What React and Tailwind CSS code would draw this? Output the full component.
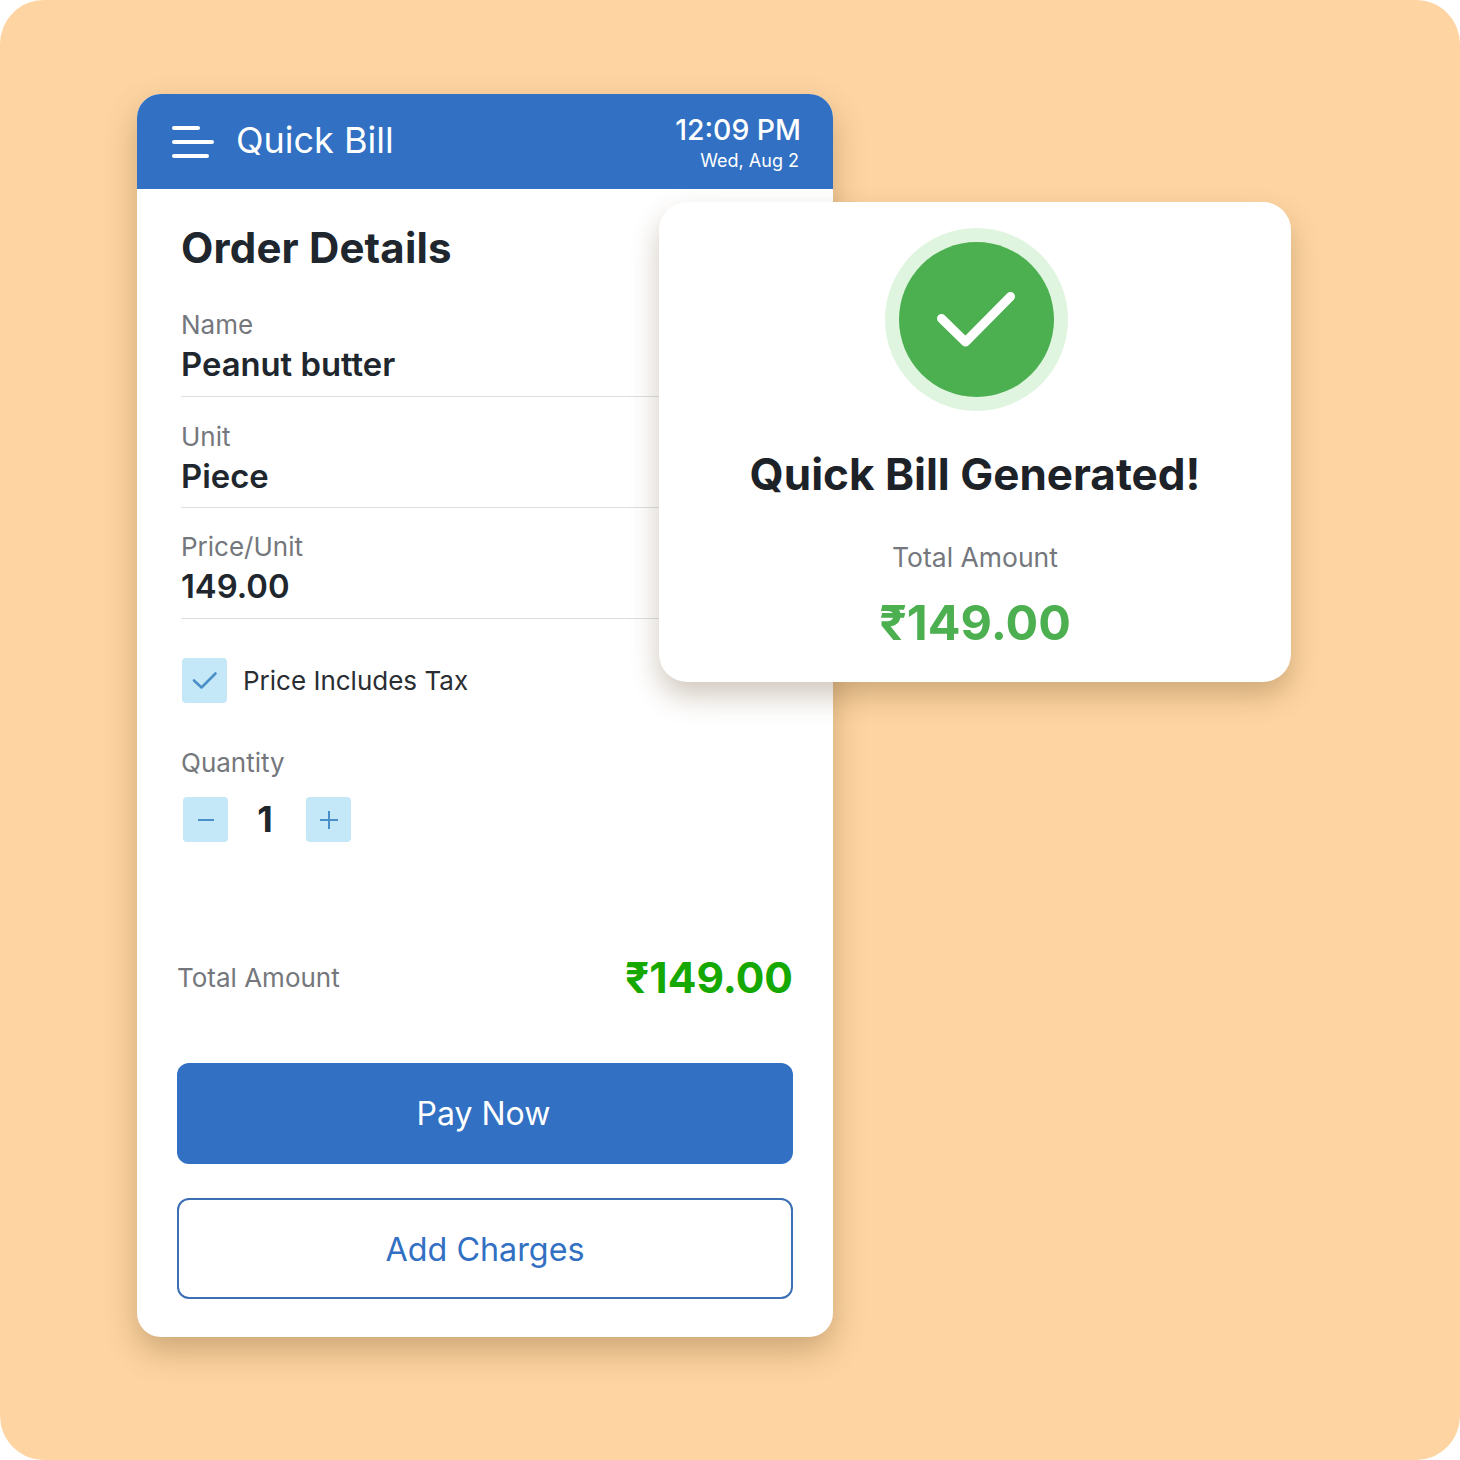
import React from 'react';

const Field = ({ label, value, className }) => (
    <div className={`border-b border-[#dcdee1] ${className}`}>
        <div className="text-[26px] leading-[32px] text-[#74777c]">{label}</div>
        <div className="mt-[3px] text-[32.8px] leading-[40px] font-semibold text-[#20262d]">{value}</div>
    </div>
);

const SmallBox = ({ children, className }) => (
    <div className={`flex items-center justify-center w-[45px] h-[45px] rounded-[4px] bg-[#c5e8f8] ${className}`}>
        {children}
    </div>
);

const App = () => {
    return (
        <div className="bg-white w-[1460px] h-[1460px] font-['Inter',sans-serif]">
            <div className="w-full h-full rounded-[44px] bg-[#fed5a2] pt-[94px] pl-[137px]">
                <div className="relative w-[696px] h-[1243px] bg-white rounded-[24px] shadow-[0_14px_32px_rgba(90,60,20,0.3)] flex flex-col">
                    <div className="flex items-center justify-between h-[95px] bg-[#3170c2] rounded-t-[24px] pl-[35px] pr-[32px] text-white">
                        <div className="flex items-center gap-[22px]">
                            <svg width="42" height="34" viewBox="0 0 42 34" fill="none" stroke="white" strokeWidth="4" strokeLinecap="round">
                                <path d="M2 3H26" />
                                <path d="M2 17H40" />
                                <path d="M2 31H35" />
                            </svg>
                            <span className="text-[36px] leading-[44px] -mt-[4px]">Quick Bill</span>
                        </div>
                        <div className="flex flex-col items-end pt-[2px]">
                            <span className="text-[28.4px] leading-[34px] font-medium">12:09 PM</span>
                            <span className="text-[18px] leading-[24px] mr-[2px] mt-[2px]">Wed, Aug 2</span>
                        </div>
                    </div>

                    <div className="flex flex-col pl-[44px] pr-[40px] pt-[33px]">
                        <h1 className="text-[42px] leading-[52px] font-bold tracking-[0.16px] text-[#20262d]">Order Details</h1>
                        <Field label="Name" value="Peanut butter" className="mt-[35px] pb-[12px]" />
                        <Field label="Unit" value="Piece" className="mt-[24px] pb-[11px]" />
                        <Field label="Price/Unit" value="149.00" className="mt-[23px] pb-[12px]" />

                        <div className="flex items-center gap-[16px] mt-[39px] ml-[1px]">
                            <SmallBox>
                                <svg width="26" height="20" viewBox="0 0 26 20" fill="none" stroke="#4a90c8" strokeWidth="2.6" strokeLinecap="round" strokeLinejoin="round">
                                    <path d="M2 9.5L9.5 16.5L23.5 2.5" />
                                </svg>
                            </SmallBox>
                            <span className="text-[26px] leading-[34px] text-[#2a2e33]">Price Includes Tax</span>
                        </div>

                        <div className="mt-[44px] text-[26px] leading-[32px] text-[#74777c]">Quantity</div>
                        <div className="flex items-center mt-[18px] ml-[2px]">
                            <SmallBox>
                                <svg width="18" height="4" viewBox="0 0 18 4" fill="none" stroke="#4a90c8" strokeWidth="2">
                                    <path d="M1 2H17" />
                                </svg>
                            </SmallBox>
                            <span className="w-[78px] pr-[4px] pb-[2px] text-center text-[36px] leading-[42px] font-bold text-[#20262d]">1</span>
                            <SmallBox>
                                <svg width="20" height="20" viewBox="0 0 20 20" fill="none" stroke="#4a90c8" strokeWidth="2">
                                    <path d="M1 10H19" />
                                    <path d="M10 1V19" />
                                </svg>
                            </SmallBox>
                        </div>

                        <div className="flex items-center justify-between mt-[109px] -ml-[4px]">
                            <span className="text-[26px] leading-[32px] text-[#74777c]">Total Amount</span>
                            <span className="text-[42.5px] leading-[54px] font-bold text-[#14a800]">₹149.00</span>
                        </div>

                        <button className="mt-[58px] -ml-[4px] h-[101px] rounded-[12px] bg-[#3170c2] text-white text-[32px] pr-[3px] pt-[1px]">Pay Now</button>
                        <button className="mt-[34px] -ml-[4px] h-[101px] rounded-[12px] border-2 border-[#3d6fb4] bg-white text-[#3170c2] text-[32.3px] pt-[4px]">Add Charges</button>
                    </div>

                    {/* popup overlaps the card */}
                    <div className="absolute left-[522px] top-[108px] w-[632px] h-[480px] bg-white rounded-[28px] shadow-[0_14px_28px_rgba(90,60,20,0.28)] flex flex-col items-center pt-[26px]">
                        <div className="flex items-center justify-center w-[183px] h-[183px] ml-[3px] rounded-full bg-[#e0f5e0]">
                            <div className="flex items-center justify-center w-[155px] h-[155px] -mt-[1px] -ml-[1px] rounded-full bg-[#4caf50]">
                                <svg width="80" height="56" viewBox="0 0 80 56" fill="none" stroke="white" strokeWidth="9" strokeLinecap="round" strokeLinejoin="round">
                                    <path d="M5.5 27.5L29.5 51L74.5 5.5" />
                                </svg>
                            </div>
                        </div>
                        <div className="mt-[36px] text-[44px] leading-[54px] font-bold text-[#1d2228]">Quick Bill Generated!</div>
                        <div className="mt-[39px] text-[26.5px] leading-[34px] text-[#74777c]">Total Amount</div>
                        <div className="mt-[19px] text-[48.5px] leading-[60px] font-bold text-[#4caf50]">₹149.00</div>
                    </div>
                </div>
            </div>
        </div>
    );
};

export default App;
